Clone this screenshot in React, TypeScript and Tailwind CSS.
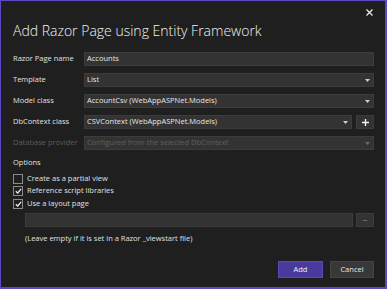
import { useState } from "react";

const font = { fontFamily: '"Open Sans", "Noto Sans", sans-serif' };

const Caret = ({ dim }: { dim?: boolean }) => (
  <svg width="5" height="3" viewBox="0 0 5 3" className="shrink-0">
    <path d="M0 0h5L2.5 3z" fill={dim ? "#6a6a6a" : "#d0d0d0"} />
  </svg>
);

const Field = ({ value, select, dim }: { value: string; select?: boolean; dim?: boolean }) => (
  <div className="flex-1 h-[14px] bg-[#333333] border border-[#3c3c3c] flex items-center justify-between pl-[2px] pr-[3px]">
    <span className={`text-[7.5px] leading-none ${dim ? "text-[#5f5f5f]" : "text-[#e6e6e6]"}`}>{value}</span>
    {select && <Caret dim={dim} />}
  </div>
);

const Row = ({ label, children, dim }: { label: string; children: React.ReactNode; dim?: boolean }) => (
  <div className="flex items-center h-[14px]">
    <div className={`w-[71px] text-[7.5px] leading-none ${dim ? "text-[#5c5c5c]" : "text-[#e0e0e0]"}`}>{label}</div>
    <div className="flex-1 flex items-center gap-[4px]">{children}</div>
  </div>
);

const Check = ({ label, on }: { label: string; on: boolean }) => (
  <div className="flex items-center gap-[4px] h-[12px]">
    <div className="w-[10px] h-[10px] border border-[#8a8a8a] flex items-center justify-center">
      {on && (
        <svg width="7" height="6" viewBox="0 0 7 6">
          <path d="M0.8 3.2 L2.7 5 L6.2 0.8" fill="none" stroke="#f0f0f0" strokeWidth="1.2" />
        </svg>
      )}
    </div>
    <span className="text-[7.5px] leading-none text-[#e0e0e0]">{label}</span>
  </div>
);

export default function App() {
  const [name] = useState("Accounts");
  return (
    <div style={font} className="w-[387px] h-[289px] bg-[#1f1f1f] border-t border-l border-r-2 border-b-2 border-[#5b48c2] flex flex-col px-[11px] text-[#e0e0e0]">
      {/* close */}
      <div className="flex justify-end h-[15px] items-end pr-[1px]">
        <svg width="7" height="7" viewBox="0 0 7 7">
          <path d="M0.5 0.5 L6.5 6.5 M6.5 0.5 L0.5 6.5" stroke="#e8e8e8" strokeWidth="1.3" />
        </svg>
      </div>

      <h1 className="text-[14px] leading-none font-light text-[#f2f2f2] mt-[8px] ml-[1px]">Add Razor Page using Entity Framework</h1>

      <div className="flex flex-col gap-[7px] mt-[14px] ml-[1px]">
        <Row label="Razor Page name"><Field value={name} /></Row>
        <Row label="Template"><Field value="List" select /></Row>
        <Row label="Model class"><Field value="AccountCsv (WebAppASPNet.Models)" select /></Row>
        <Row label="DbContext class">
          <Field value="CSVContext (WebAppASPNet.Models)" select />
          <div className="w-[18px] h-[14px] bg-[#333333] border border-[#3c3c3c] flex items-center justify-center">
            <svg width="7" height="7" viewBox="0 0 7 7">
              <path d="M3.5 0 V7 M0 3.5 H7" stroke="#f0f0f0" strokeWidth="1.4" />
            </svg>
          </div>
        </Row>
        <Row label="Database provider" dim><Field value="Configured from the selected DbContext" select dim /></Row>
      </div>

      <div className="text-[7.5px] leading-none text-[#e0e0e0] mt-[9px] ml-[1px]">Options</div>

      <div className="flex flex-col gap-[0.5px] mt-[6px] ml-[1px]">
        <Check label="Create as a partial view" on={false} />
        <Check label="Reference script libraries" on />
        <Check label="Use a layout page" on />
      </div>

      <div className="flex items-center gap-[3px] mt-[3px] ml-[13px] h-[14px]">
        <div className="flex-1 h-[14px] bg-[#333333] border border-[#3c3c3c]" />
        <div className="w-[18px] h-[14px] bg-[#333333] border border-[#3c3c3c] flex items-center justify-center text-[6px] leading-none text-[#e0e0e0] pb-[2px]">...</div>
      </div>

      <div className="text-[7.5px] leading-none text-[#e0e0e0] mt-[8px] ml-[13px]">(Leave empty if it is set in a Razor _viewstart file)</div>

      <div className="flex justify-end gap-[7px] mt-auto mb-[9px]">
        <button className="w-[45px] h-[17px] bg-[#4a3a9e] border border-[#5a49b5] text-[7.5px] leading-none text-[#f0f0f0]">Add</button>
        <button className="w-[44px] h-[17px] bg-[#383838] border border-[#444444] text-[7.5px] leading-none text-[#e6e6e6]">Cancel</button>
      </div>
    </div>
  );
}
